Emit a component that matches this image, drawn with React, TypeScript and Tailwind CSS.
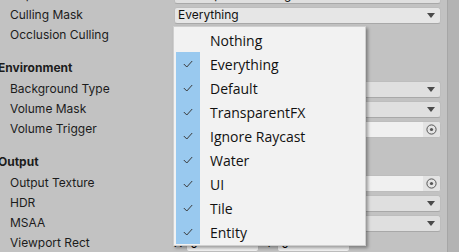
import type { ReactNode } from 'react'

const LABEL_FONT = "font-['Inter','Liberation_Sans',sans-serif]"

const MENU_ITEMS = [
  { label: 'Nothing', checked: false },
  { label: 'Everything', checked: true },
  { label: 'Default', checked: true },
  { label: 'TransparentFX', checked: true },
  { label: 'Ignore Raycast', checked: true },
  { label: 'Water', checked: true },
  { label: 'UI', checked: true },
  { label: 'Tile', checked: true },
  { label: 'Entity', checked: true },
]

function Arrow() {
  return (
    <svg width="8" height="5" viewBox="0 0 8 5" className="ml-auto mr-[5px] shrink-0">
      <path d="M0 0 H8 L4 5 Z" fill="#4a4a4a" />
    </svg>
  )
}

function Target() {
  return (
    <svg width="11" height="11" viewBox="0 0 11 11">
      <circle cx="5.5" cy="5.5" r="4.6" fill="none" stroke="#555" strokeWidth="1" />
      <circle cx="5.5" cy="5.5" r="1.6" fill="#555" />
    </svg>
  )
}

function Check() {
  return (
    <svg width="10" height="8" viewBox="0 0 10 8">
      <path d="M0.8 4 L3.8 7 L9.2 1" fill="none" stroke="#3a3a3a" strokeWidth="1" />
    </svg>
  )
}

function Row({ label, children }: { label: string; children?: ReactNode }) {
  return (
    <div className="flex h-[20px] items-center">
      <div className="w-[174px] shrink-0 pl-[10px] text-[12px] text-[#1c1c1c]">{label}</div>
      <div className="flex-1 pr-[6px]">{children}</div>
    </div>
  )
}

function Header({ label }: { label: string }) {
  return (
    <div className="mt-[12px] flex h-[22px] items-center">
      <div className="-ml-[2px] text-[12px] font-bold text-[#1c1c1c]">{label}</div>
    </div>
  )
}

function Popup({ value, light }: { value?: string; light?: boolean }) {
  return (
    <div
      className={`flex h-[17px] items-center rounded-[3px] border border-[#bdbdbd] border-b-[#a8a8a8] pl-[3px] text-[12px] text-[#111] ${
        light ? 'bg-[#e6e6e6]' : 'bg-[#dfdfdf]'
      }`}
    >
      <span>{value}</span>
      <Arrow />
    </div>
  )
}

function ObjectField() {
  return (
    <div className="flex h-[17px] items-center overflow-hidden rounded-[3px] border border-[#bdbdbd] bg-[#f0f0f0]">
      <div className="flex-1" />
      <div className="flex h-full w-[17px] items-center justify-center bg-[#e3e3e3]">
        <Target />
      </div>
    </div>
  )
}

function RectField({ letter, value }: { letter: string; value: string }) {
  return (
    <div className="flex flex-1 items-center gap-[4px]">
      <span className="text-[12px]">{letter}</span>
      <div className="h-[17px] flex-1 rounded-[3px] border border-[#bdbdbd] bg-[#f0f0f0] pl-[3px] text-[12px] leading-[15px]">
        {value}
      </div>
    </div>
  )
}

export default function App() {
  return (
    <div className={`relative h-[252px] w-[459px] overflow-hidden bg-[#c2c2c2] ${LABEL_FONT}`}>
      <div className="flex h-full">
        <div className="-mt-[15px] flex-1">
          <Row label="Depth Texture">
            <Popup value="Use Pipeline Settings" />
          </Row>
          <Row label="Culling Mask">
            <Popup value="Everything" light />
          </Row>
          <Row label="Occlusion Culling">
            <div className="h-[14px] w-[14px] rounded-[2px] border border-[#999] bg-[#f0f0f0]" />
          </Row>

          <Header label="Environment" />
          <Row label="Background Type">
            <Popup value="Skybox" />
          </Row>
          <Row label="Volume Mask">
            <Popup value="Default" />
          </Row>
          <Row label="Volume Trigger">
            <ObjectField />
          </Row>

          <Header label="Output" />
          <Row label="Output Texture">
            <ObjectField />
          </Row>
          <Row label="HDR">
            <Popup value="Off" />
          </Row>
          <Row label="MSAA">
            <Popup value="Off" />
          </Row>
          <Row label="Viewport Rect">
            <div className="flex w-[176px] gap-[6px]">
              <RectField letter="X" value="0" />
              <RectField letter="Y" value="0" />
            </div>
          </Row>
        </div>
        <div className="w-[12px] shrink-0 border-l border-[#a6a6a6] bg-[#b3b3b3]" />
      </div>

      <div className="absolute left-[173px] top-[26px] w-[193px] border border-[#cfcfcf] bg-[#f2f2f2] pb-[1px] pl-[2px] pt-[1px] shadow-[2px_2px_3px_rgba(0,0,0,0.35)] font-['Open_Sans','Noto_Sans',sans-serif]">
        {MENU_ITEMS.map((item) => (
          <div key={item.label} className="flex h-[24px] items-center">
            <div
              className={`flex h-full w-[24px] shrink-0 items-center justify-center ${
                item.checked ? 'bg-[#99c9ef]' : ''
              }`}
            >
              {item.checked && <Check />}
            </div>
            <span className="pl-[10px] text-[14px] text-[#111]">{item.label}</span>
          </div>
        ))}
      </div>
    </div>
  )
}
